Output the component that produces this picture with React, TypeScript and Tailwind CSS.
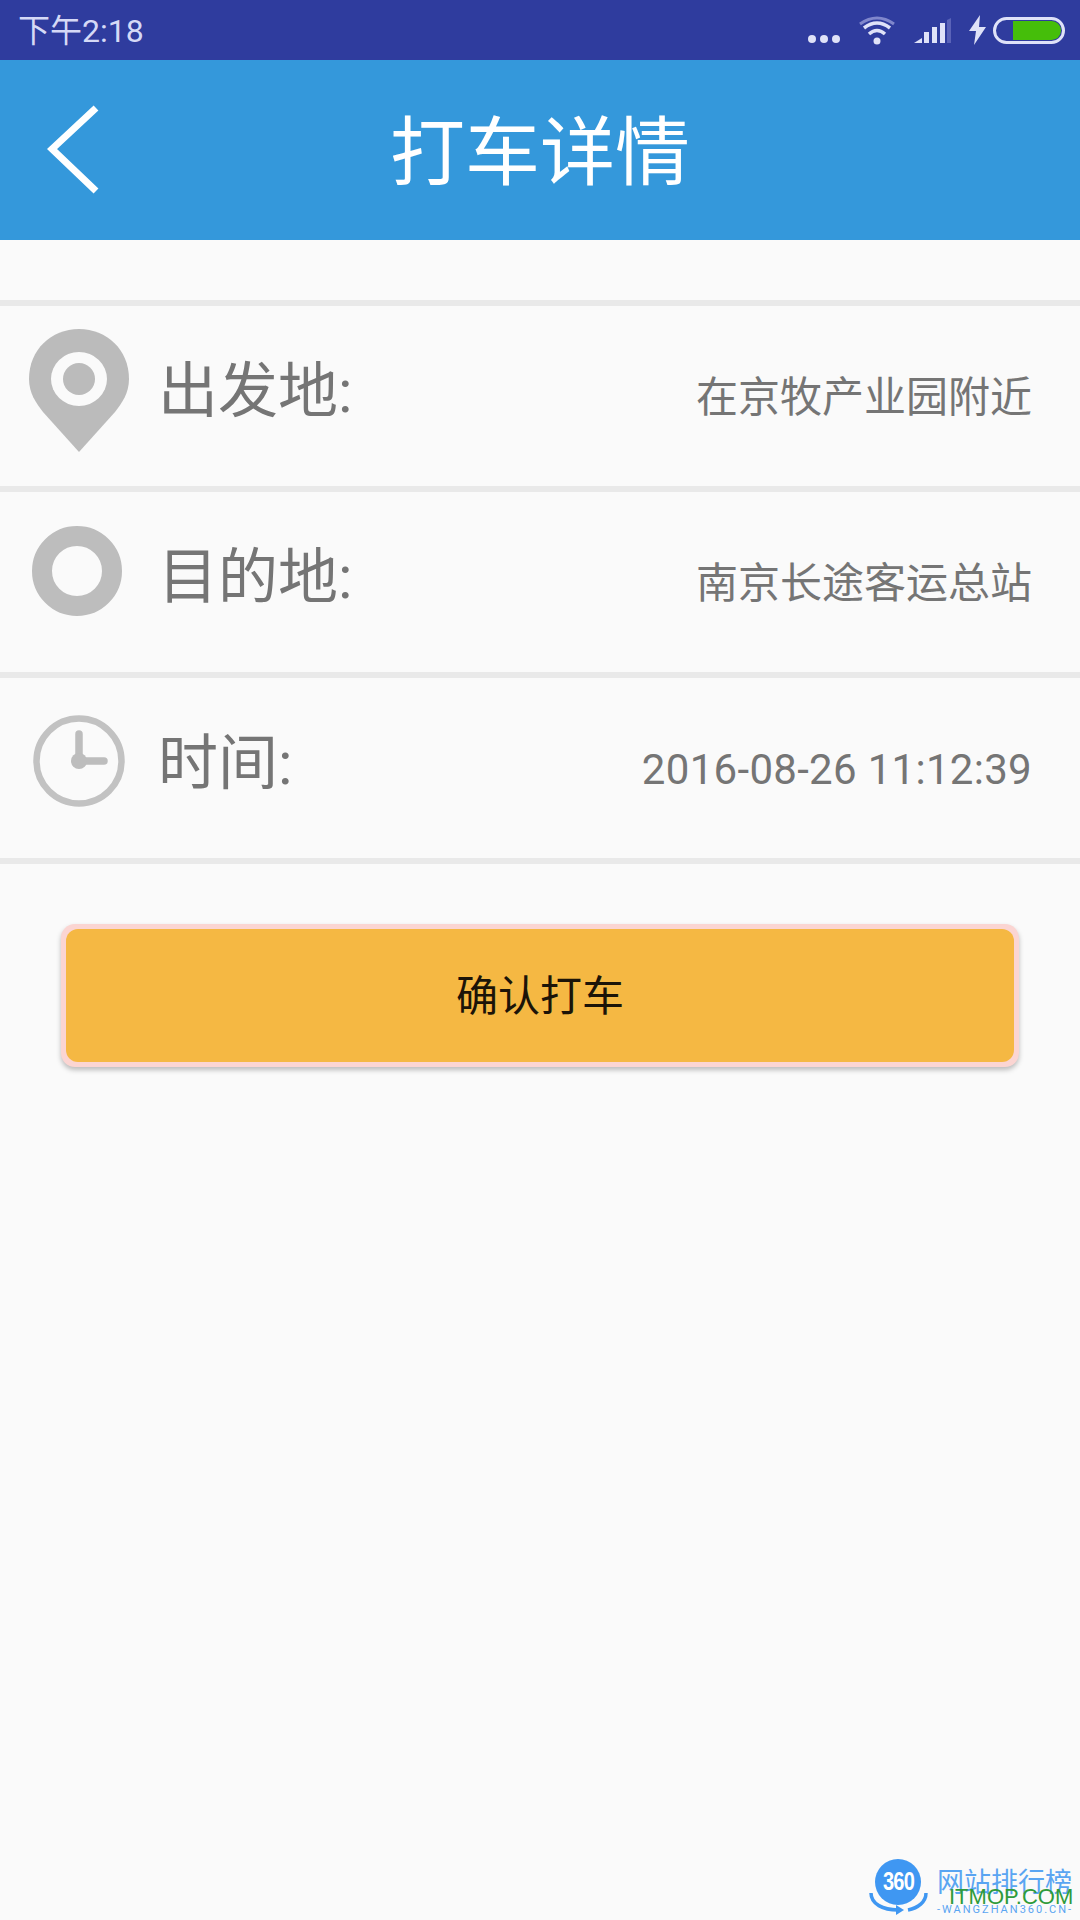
const FONT = "font-['Roboto','Noto_Sans_CJK_SC',sans-serif]";

function StatusIcons() {
  return (
    <div className="flex items-center">
      {/* dots */}
      <svg width="34" height="10" viewBox="0 0 34 10" className="mt-[18px] mr-[17px]">
        <circle cx="5" cy="5" r="4" fill="#dfe2f8" />
        <circle cx="17" cy="5" r="4" fill="#dfe2f8" />
        <circle cx="29" cy="5" r="4" fill="#dfe2f8" />
      </svg>
      {/* wifi */}
      <svg width="38" height="30" viewBox="0 0 38 30" className="mr-[18px]" fill="none">
        <path d="M2 9 Q19 -3 36 9" stroke="#8087cc" strokeWidth="3" />
        <path d="M6 13 Q19 3 32 13" stroke="#dfe2f8" strokeWidth="3.5" />
        <path d="M11 19 Q19 12 27 19" stroke="#dfe2f8" strokeWidth="3.5" />
        <circle cx="19" cy="26" r="3.5" fill="#dfe2f8" />
      </svg>
      {/* signal */}
      <svg width="38" height="26" viewBox="0 0 38 26" className="mt-[2px] mr-[17px]">
        <path d="M0 25 L8 20 V25 Z" fill="#dfe2f8" />
        <rect x="10" y="14" width="5" height="11" fill="#dfe2f8" />
        <rect x="18" y="9" width="5" height="16" fill="#dfe2f8" />
        <rect x="26" y="5" width="5" height="20" fill="#dfe2f8" />
        <path d="M33 2 L37 0 V25 H33 Z" fill="#5a63b8" />
      </svg>
      {/* bolt */}
      <svg width="18" height="30" viewBox="0 0 18 30" className="mr-[6px]">
        <path d="M11 0 L0 16 H7 L5 30 L17 12 H10 Z" fill="#dfe2f8" />
      </svg>
      {/* battery */}
      <div className="w-[72px] h-[27px] rounded-full border-[3px] border-[#dfe2f8] flex justify-end items-center pr-[1px]">
        <div className="w-[48px] h-[19px] bg-[#45be0a] rounded-r-full" />
      </div>
    </div>
  );
}

function PinIcon() {
  return (
    <svg width="100" height="123" viewBox="0 0 100 123">
      <path
        d="M50 0 C78 0 100 21 100 50 C100 64 93 74 86 83 L50 123 L14 83 C7 74 0 64 0 50 C0 21 22 0 50 0 Z"
        fill="#bbbbbb"
      />
      <ellipse cx="50" cy="50" rx="28" ry="27" fill="#fafafa" />
      <circle cx="50" cy="50" r="16" fill="#bbbbbb" />
    </svg>
  );
}

function RingIcon() {
  return (
    <svg width="90" height="90" viewBox="0 0 90 90">
      <circle cx="45" cy="45" r="35" fill="none" stroke="#bdbdbd" strokeWidth="20" />
    </svg>
  );
}

function ClockIcon() {
  return (
    <svg width="92" height="92" viewBox="0 0 92 92" fill="none">
      <circle cx="46" cy="46" r="42.5" stroke="#c2c2c2" strokeWidth="6.5" />
      <path d="M46 19 V46 H71" stroke="#bdbdbd" strokeWidth="7.5" strokeLinecap="round" />
      <circle cx="46" cy="46" r="8" fill="#bdbdbd" />
    </svg>
  );
}

function Row({ icon, iconClass, label, value, valueClass }: { icon: React.ReactNode; iconClass: string; label: string; value: string; valueClass?: string }) {
  return (
    <div className="h-[180px] flex items-center border-b-[6px] border-[#e9e9e9] box-content">
      <div className={`w-[158px] shrink-0 flex ${iconClass}`}>{icon}</div>
      <span className="text-[60px] leading-none text-[#757575] -mt-[8px]">{label}</span>
      <span className={`ml-auto mr-[48px] mt-[4px] text-[42px] leading-none text-[#757575] ${valueClass ?? ''}`}>{value}</span>
    </div>
  );
}

export default function App() {
  return (
    <div className={`relative w-[1080px] h-[1920px] overflow-hidden bg-[#fafafa] ${FONT}`}>
      <div className="h-[60px] bg-[#2f3c9e] flex items-center justify-between pl-[18px] pr-[15px]">
        <span className="text-[32px] leading-none text-[#d5d9f6] mt-[1px]">下午2:18</span>
        <StatusIcons />
      </div>

      <div className="relative h-[180px] bg-[#3498db] flex items-center justify-center">
        <svg width="52" height="96" viewBox="0 0 52 96" fill="none" className="absolute left-[47px] top-[42px]">
          <path d="M49 6 L5 47 L49 89" stroke="#ffffff" strokeWidth="7" />
        </svg>
        <h1 className="text-[75px] leading-none text-white font-normal mt-[6px]">打车详情</h1>
      </div>

      <div className="mt-[60px] border-t-[6px] border-[#e9e9e9]">
        <Row icon={<PinIcon />} iconClass="pl-[29px] -mt-[12px]" label="出发地:" value="在京牧产业园附近" />
        <Row icon={<RingIcon />} iconClass="pl-[32px] -mt-[22px]" label="目的地:" value="南京长途客运总站" />
        <Row icon={<ClockIcon />} iconClass="pl-[33px] -mt-[15px]" label="时间:" value="2016-08-26 11:12:39" valueClass="tracking-[0.3px]" />
      </div>

      <div className="mt-[60px] mx-[61px] h-[143px] rounded-[14px] bg-[#fbd5d2] p-[5px] shadow-[0_3px_5px_rgba(0,0,0,0.25)]">
        <button className="w-full h-full rounded-[12px] bg-[#f5b843] text-[42px] leading-none text-[#1c1408] pt-[2px]">确认打车</button>
      </div>

      {/* watermark */}
      <div className="absolute left-[868px] top-[1856px] w-[212px] h-[64px]">
        <svg width="64" height="62" viewBox="0 0 64 62" className="absolute left-0 top-0" fill="none">
          <circle cx="30" cy="26" r="23" fill="#3f97f2" />
          <path d="M3 37 C3 48 15 54 30 54" stroke="#3f97f2" strokeWidth="3.5" />
          <path d="M28 49 L36 54 L28 59 Z" fill="#3f97f2" />
          <path d="M58 37 C58 46 50 52 40 54" stroke="#3f97f2" strokeWidth="3.5" />
        </svg>
        <span className="absolute left-[15px] top-[13px] text-[25px] leading-none font-bold text-white font-['Liberation_Sans',sans-serif] tracking-[-1px] scale-x-[0.8] origin-left">360</span>
        <span className="absolute left-[69px] top-[14px] text-[27px] leading-none whitespace-nowrap text-[#5aa5f2]">网站排行榜</span>
        <span className="absolute left-[81px] top-[30px] text-[22px] leading-none whitespace-nowrap text-[#2f9b3a] font-['Liberation_Sans',sans-serif]">ITMOP.COM</span>
        <span className="absolute left-[69px] top-[48px] text-[11px] leading-none whitespace-nowrap tracking-[2px] text-[#5aa5f2]">-WANGZHAN360.CN-</span>
      </div>
    </div>
  );
}
